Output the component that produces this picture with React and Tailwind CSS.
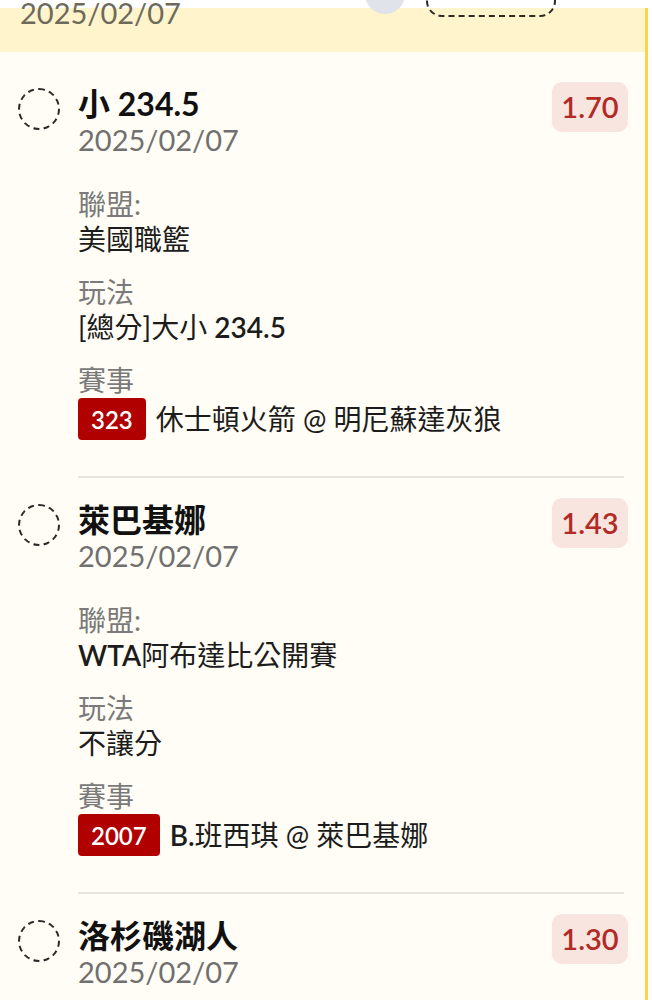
const bets = [
  {
    title: "小 234.5",
    date: "2025/02/07",
    odds: "1.70",
    league: ["美國職籃"],
    play: ["[總分]大小 ", <b key="n">234.5</b>],
    code: "323",
    event: ["休士頓火箭 @ 明尼蘇達灰狼"],
  },
  {
    title: "萊巴基娜",
    date: "2025/02/07",
    odds: "1.43",
    league: [<b key="w">WTA</b>, "阿布達比公開賽"],
    play: ["不讓分"],
    code: "2007",
    event: [<b key="b">B.</b>, "班西琪 @ 萊巴基娜"],
  },
  {
    title: "洛杉磯湖人",
    date: "2025/02/07",
    odds: "1.30",
    league: ["美國職籃"],
    play: ["不讓分"],
    code: "305",
    event: ["洛杉磯湖人 @ 猶他爵士"],
  },
];

function BetItem({ bet, first }) {
  return (
    <div className={`flex pl-[18px] pr-[17px] ${first ? "pt-[30px]" : "pt-[20px]"}`}>
      <div className="mt-[6px] h-[42px] w-[42px] shrink-0 rounded-full border-2 border-dashed border-[#2a2a2a]" />
      <div className="ml-[18px] flex-1">
        <div className="flex items-start justify-between">
          <div className="mt-[3px]">
            <p className="text-[32px] font-bold leading-[38px] text-[#111]">{bet.title}</p>
            <p className="text-[29px] leading-[34px] text-[#707070]">{bet.date}</p>
          </div>
          <div className="flex h-[50px] w-[76px] items-center justify-center rounded-[10px] bg-[#f8e5e0] text-[29px] font-semibold text-[#b22a24]">
            {bet.odds}
          </div>
        </div>

        <div className="mt-[30px] text-[28px] leading-[35px] [&_b]:font-semibold">
          <p className="text-[#7a7a7a]">聯盟:</p>
          <p className="text-[#1c1c1c]">{bet.league}</p>
          <p className="mt-[18px] text-[#7a7a7a]">玩法</p>
          <p className="text-[#1c1c1c]">{bet.play}</p>
          <p className="mt-[18px] text-[#7a7a7a]">賽事</p>
          <div className="flex items-center gap-[10px]">
            <span className="flex h-[42px] items-center rounded-[4px] bg-[#b00000] px-[13px] text-[24px] font-semibold text-white">
              {bet.code}
            </span>
            <span className="text-[#1c1c1c]">{bet.event}</span>
          </div>
        </div>

        <div className="mr-[4px] mt-[36px] h-[2px] bg-[#e7e4de]" />
      </div>
    </div>
  );
}

export default function App() {
  return (
    <div className="h-[1000px] w-[652px] overflow-hidden bg-white font-[Lato,'Noto_Sans_CJK_TC',sans-serif]">
      <div className="h-[8px]" />
      <div className="min-h-[992px] w-[648px] border-r-[3px] border-[#f6d74c] bg-[#fffdf5]">
        {/* tail of the selected row above */}
        <div className="flex h-[44px] items-start bg-[#fff4cb]">
          <div className="-mt-[12px] w-[365px] pl-[20px] text-[29px] leading-[34px] text-[#6d6a5c]">
            2025/02/07
          </div>
          <div className="-mt-[34px] h-[40px] w-[40px] rounded-full bg-[#e1e3ea]" />
          <div className="-mt-[35px] ml-[21px] h-[44px] w-[130px] rounded-[16px] border-2 border-dashed border-[#2a2a2a]" />
        </div>

        {bets.map((bet, i) => (
          <BetItem key={i} bet={bet} first={i === 0} />
        ))}
      </div>
    </div>
  );
}
